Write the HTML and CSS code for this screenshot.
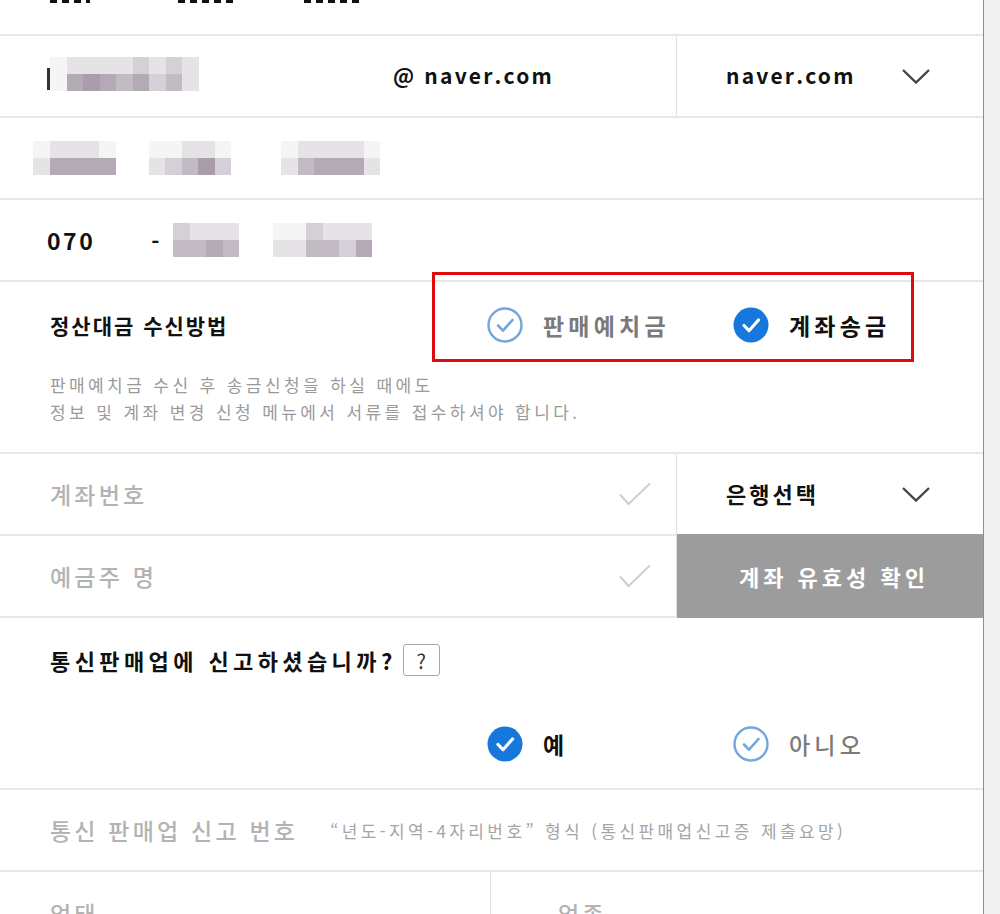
FILE: index.html
```html
<!DOCTYPE html>
<html lang="ko">
<head>
<meta charset="utf-8">
<title>정산대금 정보</title>
<link rel="stylesheet" href="styles.css">
</head>
<body>
<div class="page">
  <div class="row row-top">
    <span class="frag f1"></span><span class="frag f2"></span><span class="frag f3"></span>
  </div>

  <div class="row">
    <div class="cell main email">
      <div class="mosaic m-email">
        <span class="caret"></span>
        <div class="grid g9">
          <i class="c0"></i><i class="c1"></i><i class="c1"></i><i class="c1"></i><i class="c1"></i><i class="c2"></i><i class="c1"></i><i class="c2"></i><i class="c1"></i>
          <i class="c0"></i><i class="c4"></i><i class="c5"></i><i class="c4"></i><i class="c3"></i><i class="c4"></i><i class="c2"></i><i class="c3"></i><i class="c1"></i>
        </div>
      </div>
      <span class="domain">@ naver.com</span>
    </div>
    <div class="cell side select">
      <span class="sel-text">naver.com</span>
      <svg class="chev" width="30" height="16" viewBox="0 0 30 16"><path d="M2 2l13 12.5L28 2" fill="none" stroke="#444" stroke-width="2.4"/></svg>
    </div>
  </div>

  <div class="row">
    <div class="cell full phone-blur">
      <div class="grid g5 gA">
        <i class="c0"></i><i class="c1"></i><i class="c1"></i><i class="c1"></i><i class="c0"></i>
        <i class="c1"></i><i class="c4"></i><i class="c4"></i><i class="c4"></i><i class="c4"></i>
      </div>
      <div class="grid g5 gB">
        <i class="c0"></i><i class="c0"></i><i class="c1"></i><i class="c1"></i><i class="c0"></i>
        <i class="c1"></i><i class="c2"></i><i class="c3"></i><i class="c5"></i><i class="c2"></i>
      </div>
      <div class="grid g6 gC">
        <i class="c0"></i><i class="c1"></i><i class="c1"></i><i class="c1"></i><i class="c1"></i><i class="c0"></i>
        <i class="c1"></i><i class="c3"></i><i class="c4"></i><i class="c4"></i><i class="c4"></i><i class="c1"></i>
      </div>
    </div>
  </div>

  <div class="row">
    <div class="cell full tel">
      <span class="tel-pre">070</span>
      <span class="tel-dash">-</span>
      <div class="grid g4 gD">
        <i class="c2"></i><i class="c1"></i><i class="c1"></i><i class="c1"></i>
        <i class="c3"></i><i class="c3"></i><i class="c4"></i><i class="c3"></i>
      </div>
      <div class="grid g6 gE">
        <i class="c0"></i><i class="c0"></i><i class="c2"></i><i class="c1"></i><i class="c1"></i><i class="c1"></i>
        <i class="c1"></i><i class="c1"></i><i class="c3"></i><i class="c3"></i><i class="c2"></i><i class="c4"></i>
      </div>
    </div>
  </div>

  <div class="row tall method">
    <div class="line-head">
      <span class="title">정산대금 수신방법</span>
      <div class="options">
        <label class="opt">
          <svg class="radio" width="36" height="36" viewBox="0 0 36 36"><circle cx="18" cy="18" r="16.5" fill="none" stroke="#73a6dc" stroke-width="2.4"/><path d="M11 18.5l5 5.2L25.5 13" fill="none" stroke="#73a6dc" stroke-width="2.6" stroke-linecap="round" stroke-linejoin="round"/></svg>
          <span class="opt-label off">판매예치금</span>
        </label>
        <label class="opt">
          <svg class="radio" width="36" height="36" viewBox="0 0 36 36"><circle cx="18" cy="18" r="17.5" fill="#1678dc"/><path d="M11 18.5l5 5.2L25.5 13" fill="none" stroke="#fff" stroke-width="3.2" stroke-linecap="round" stroke-linejoin="round"/></svg>
          <span class="opt-label on">계좌송금</span>
        </label>
      </div>
    </div>
    <p class="help">판매예치금 수신 후 송금신청을 하실 때에도<br>정보 및 계좌 변경 신청 메뉴에서 서류를 접수하셔야 합니다.</p>
    <div class="highlight"></div>
  </div>

  <div class="row">
    <div class="cell main field">
      <span class="placeholder">계좌번호</span>
      <svg class="ok" width="34" height="24" viewBox="0 0 34 24"><path d="M2 12.5l8.5 9.5L32 1.5" fill="none" stroke="#cfcfcf" stroke-width="2"/></svg>
    </div>
    <div class="cell side select">
      <span class="sel-text bank">은행선택</span>
      <svg class="chev" width="30" height="16" viewBox="0 0 30 16"><path d="M2 2l13 12.5L28 2" fill="none" stroke="#444" stroke-width="2.4"/></svg>
    </div>
  </div>

  <div class="row">
    <div class="cell main field">
      <span class="placeholder">예금주 명</span>
      <svg class="ok" width="34" height="24" viewBox="0 0 34 24"><path d="M2 12.5l8.5 9.5L32 1.5" fill="none" stroke="#cfcfcf" stroke-width="2"/></svg>
    </div>
    <div class="cell side verify">계좌 유효성 확인</div>
  </div>

  <div class="row tall report">
    <div class="line-q">
      <span class="title">통신판매업에 신고하셨습니까?</span>
      <span class="qbox">?</span>
    </div>
    <div class="line-opts">
      <div class="options">
        <label class="opt">
          <svg class="radio" width="36" height="36" viewBox="0 0 36 36"><circle cx="18" cy="18" r="17.5" fill="#1678dc"/><path d="M11 18.5l5 5.2L25.5 13" fill="none" stroke="#fff" stroke-width="3.2" stroke-linecap="round" stroke-linejoin="round"/></svg>
          <span class="opt-label on">예</span>
        </label>
        <label class="opt">
          <svg class="radio" width="36" height="36" viewBox="0 0 36 36"><circle cx="18" cy="18" r="16.5" fill="none" stroke="#73a6dc" stroke-width="2.4"/><path d="M11 18.5l5 5.2L25.5 13" fill="none" stroke="#73a6dc" stroke-width="2.6" stroke-linecap="round" stroke-linejoin="round"/></svg>
          <span class="opt-label off light">아니오</span>
        </label>
      </div>
    </div>
  </div>

  <div class="row">
    <div class="cell full regno">
      <span class="placeholder">통신 판매업 신고 번호</span>
      <span class="hint">“년도-지역-4자리번호” 형식 (통신판매업신고증 제출요망)</span>
    </div>
  </div>

  <div class="row last">
    <div class="cell half-l"><span class="placeholder">업태</span></div>
    <div class="cell half-r"><span class="placeholder">업종</span></div>
  </div>
</div>
</body>
</html>
```

FILE: styles.css
```css
* { box-sizing: border-box; }
html, body { margin: 0; padding: 0; }
body {
  background: #f1f1f1;
  font-family: "Noto Sans CJK KR", "Noto Sans", sans-serif;
  color: #111;
  height: 914px;
  overflow: hidden;
}
.page {
  width: 984px;
  background: #fff;
  border-right: 1px solid #8e8e8e;
  min-height: 914px;
}
.row {
  display: flex;
  height: 82px;
  border-top: 2px solid #e7e7e7;
  position: relative;
}
.row-top {
  height: 34px;
  border-top: 0;
  align-items: flex-start;
}
.frag {
  display: block;
  height: 3px;
  background: repeating-linear-gradient(90deg, #111 0 7px, transparent 7px 12px);
  position: relative;
}
.f1 { margin-left: 50px; width: 40px; }
.f2 { margin-left: 88px; width: 60px; }
.f3 { margin-left: 66px; width: 58px; }

.cell { display: flex; align-items: center; height: 100%; }
.main { width: 677px; border-right: 1px solid #e0e0e0; }
.side { flex: 1; }
.full { width: 100%; }

.email { padding: 0 122px 0 47px; justify-content: space-between; }
.mosaic { display: flex; align-items: center; margin-top: -4px; }
.caret { width: 3px; height: 22px; background: #333; margin-top: 10px; }
.grid { display: grid; grid-auto-rows: 17px; }
.grid i { display: block; }
.g9 { grid-template-columns: repeat(9, 16.5px); }
.g6 { grid-template-columns: repeat(6, 16.5px); }
.g5 { grid-template-columns: repeat(5, 16.5px); }
.g4 { grid-template-columns: repeat(4, 16.5px); }
.c0 { background: #f6f5f6; }
.c1 { background: #e6e3e7; }
.c2 { background: #d5d0d7; }
.c3 { background: #c2bbc4; }
.c4 { background: #b3aab6; }
.c5 { background: #a99cab; }

.domain, .sel-text {
  font-size: 21px;
  font-weight: 700;
  letter-spacing: 2.2px;
  color: #111;
  margin-top: -3px;
}
.select { padding: 0 52px 0 49px; justify-content: space-between; }
.bank { font-size: 22px; letter-spacing: 3px; margin-top: -2px; }

.phone-blur { padding-left: 33px; }
.gB { margin-left: 33px; }
.gC { margin-left: 50px; }

.tel { padding-left: 47px; }
.tel-pre { font-size: 23px; font-weight: 700; letter-spacing: 2.5px; }
.tel-dash { margin-left: 56px; font-size: 22px; font-weight: 700; width: 22px; }
.gE { margin-left: 34px; }

.tall { height: 172px; display: block; }
.method .line-head { display: flex; align-items: center; height: 86px; padding-left: 50px; }
.title { font-size: 21px; font-weight: 700; letter-spacing: 2px; color: #111; }
.method .title { width: 437px; }
.options { display: flex; align-items: center; }
.opt { display: flex; align-items: center; width: 246px; }
.radio { flex: none; }
.opt-label { margin-left: 20px; font-size: 23px; font-weight: 700; letter-spacing: 4.2px; }
.opt-label.off { color: #7a7a7a; }
.opt-label.light { font-weight: 500; }
.opt-label.on { color: #111; }
.help {
  margin: 0;
  padding-left: 50px;
  padding-top: 3px;
  font-size: 17px;
  line-height: 27px;
  letter-spacing: 3.4px;
  color: #9a9a9a;
}
.highlight {
  position: absolute;
  left: 432px;
  top: -10px;
  width: 482px;
  height: 90px;
  border: 3px solid #dc0c0c;
  pointer-events: none;
}

.field { padding: 0 24px 0 50px; justify-content: space-between; }
.placeholder { font-size: 23px; font-weight: 500; letter-spacing: 3.2px; color: #b3b3b3; }
.verify {
  background: #9c9c9c;
  color: #fff;
  font-size: 22px;
  font-weight: 700;
  letter-spacing: 4px;
  justify-content: center;
  margin: -2px 0;
  height: 84px;
  padding-left: 8px;
  position: relative;
  z-index: 1;
}

.report .line-q { display: flex; align-items: center; height: 84px; padding-left: 50px; }
.report .title { letter-spacing: 4.4px; font-size: 22px; }
.qbox {
  margin-left: 6px;
  width: 37px;
  height: 32px;
  border: 1px solid #a8a8a8;
  border-radius: 3px;
  display: flex;
  align-items: center;
  justify-content: center;
  font-size: 20px;
  color: #333;
}
.line-opts { padding-left: 487px; height: 86px; display: flex; align-items: center; padding-bottom: 2px; }

.regno { padding-left: 50px; }
.hint { margin-left: 32px; font-size: 17px; letter-spacing: 3.4px; color: #a5a5a5; }

.last { height: 60px; }
.half-l { width: 491px; border-right: 1px solid #e0e0e0; padding-left: 50px; align-items: flex-start; padding-top: 24px; }
.half-r { flex: 1; padding-left: 67px; align-items: flex-start; padding-top: 24px; }
```
